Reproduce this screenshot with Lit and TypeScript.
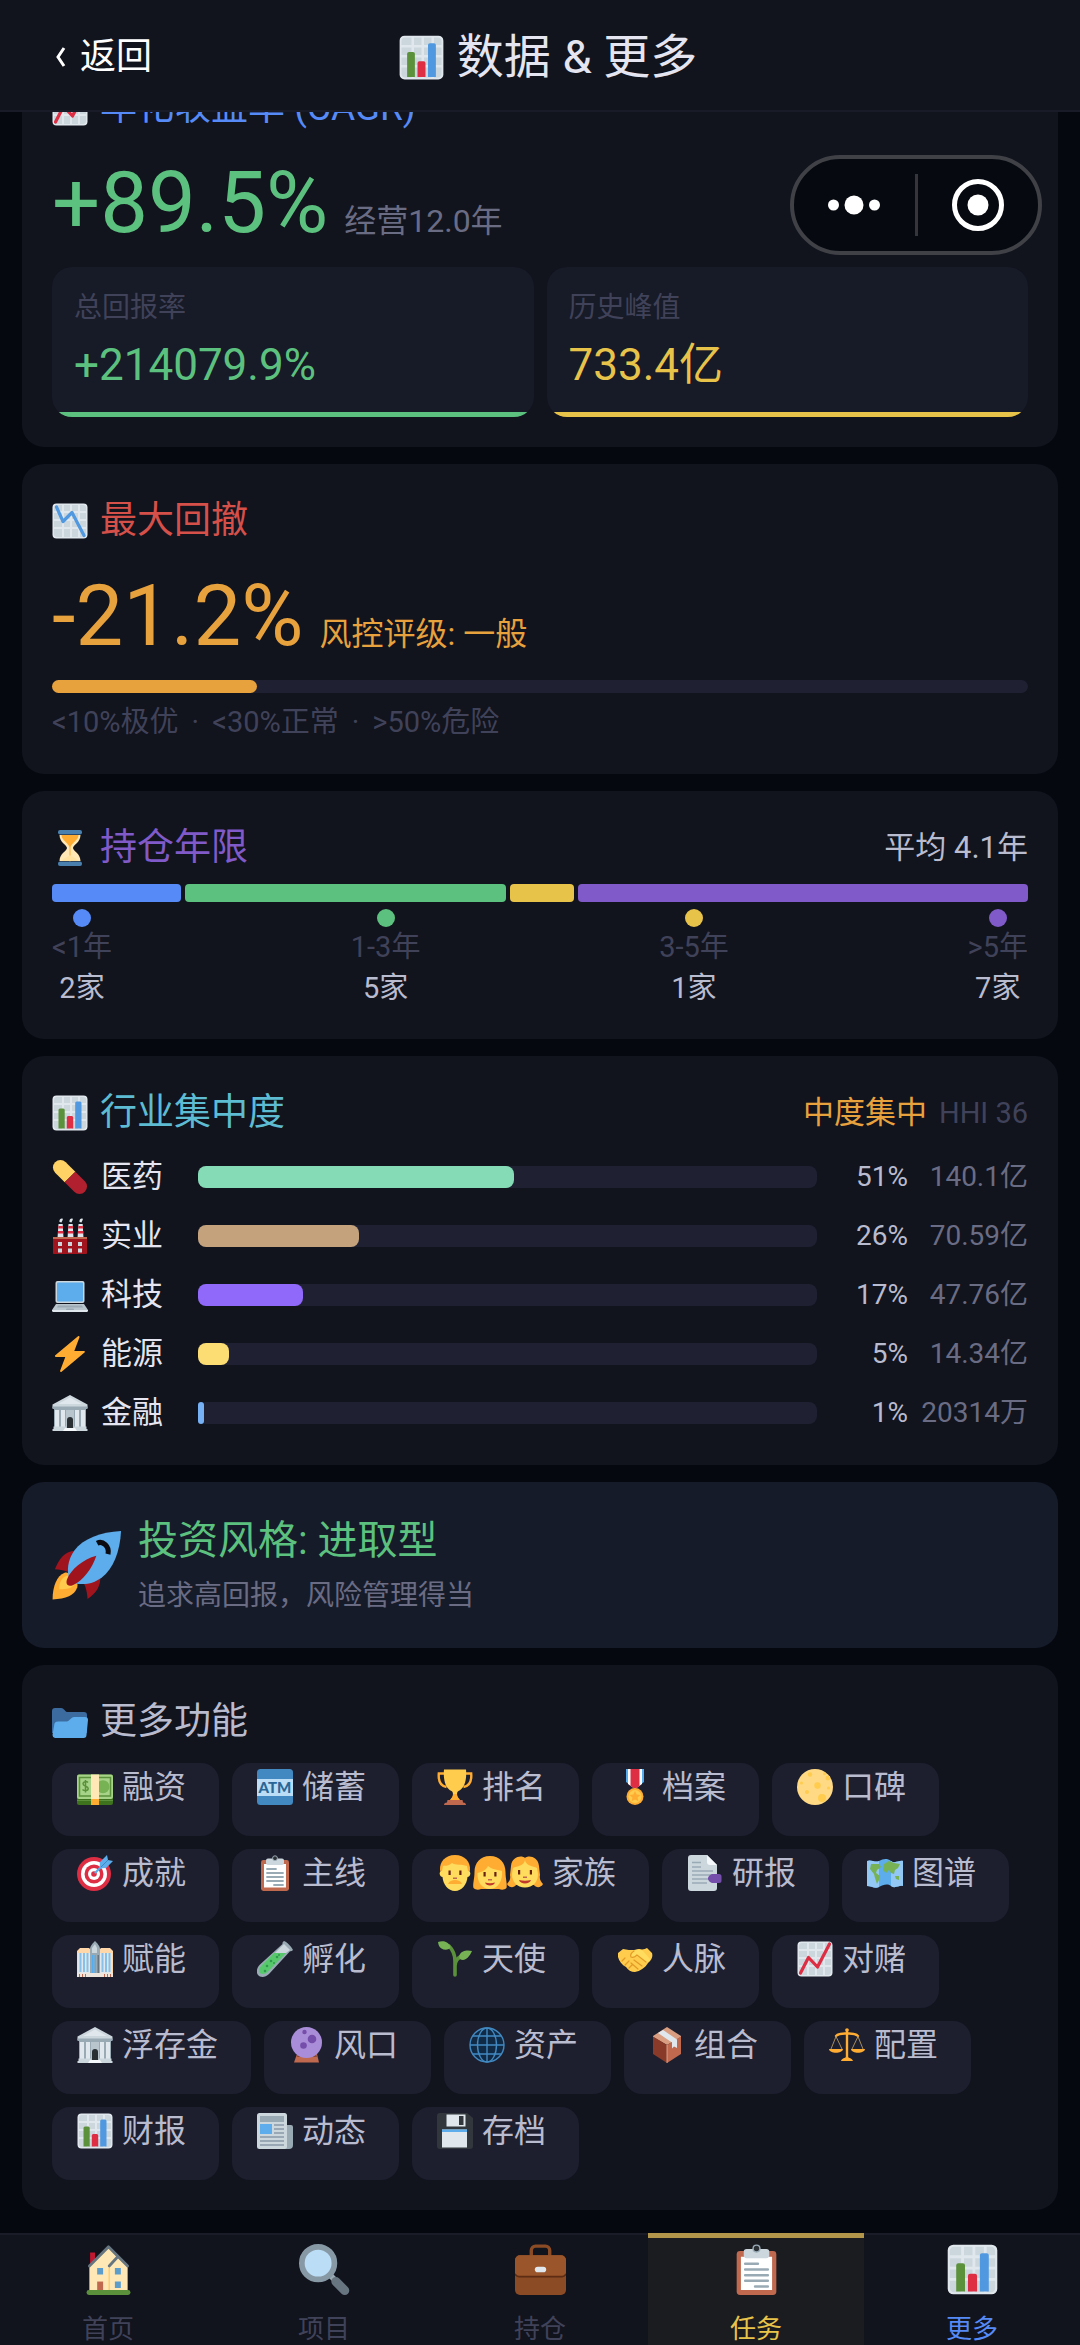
import { LitElement, html, css, svg } from "lit";
import { customElement, property } from "lit/decorators.js";
import { classMap } from "lit/directives/class-map.js";
import { styleMap } from "lit/directives/style-map.js";

const grid = svg`
  <rect x="0.5" y="0.5" width="35" height="35" rx="4" fill="#e1e8ed"/>
  <path fill="#ccd6dd" d="M2 5a3 3 0 0 1 3-3h5v6H2zM12 2h6v6h-6zM20 2h6v6h-6zM28 2h3a3 3 0 0 1 3 3v3h-6zM2 10h8v6H2zM12 10h6v6h-6zM20 10h6v6h-6zM28 10h6v6h-6zM2 18h8v6H2zM12 18h6v6h-6zM20 18h6v6h-6zM28 18h6v6h-6zM2 26h8v8H5a3 3 0 0 1-3-3zM12 26h6v8h-6zM20 26h6v8h-6zM28 26h6v5a3 3 0 0 1-3 3h-3z"/>`;

const clipboard = svg`
  <rect x="4" y="5" width="28" height="31" rx="2.4" fill="#c1694f"/>
  <path fill="#fff" d="M7 9h22v23.500H7z"/>
  <path fill="#ccd6dd" d="M22 3.500h-1.200a3 3 0 0 0-5.600 0H11A2 2 0 0 0 9 5.500V8a2 2 0 0 0 2 2h14a2 2 0 0 0 2-2V5.500a2 2 0 0 0-2-2z"/>
  <circle cx="18" cy="3.200" r="2.400" fill="#292f33" stroke="#99aab5" stroke-width="1"/>
  <path stroke="#99aab5" stroke-width="1.800" stroke-linecap="round" d="M10 14h9M10 18h16M10 22h16M10 26h16M17 30h9"/>`;

const bank = svg`
  <path fill="#ccd6dd" d="M18 0 35.500 9.500V13H.5V9.500z"/>
  <path fill="#e1e8ed" d="M18 2.500 30 9H6z"/>
  <path fill="#99aab5" d="M.5 11.500h35V14H.5zM2 14h32v18H2z"/>
  <path fill="#e1e8ed" d="M3 15h4v17H3zM9 15h4v17H9zM23 15h4v17h-4zM29 15h4v17h-4z"/>
  <path fill="#b8c5cd" d="M14 15h8v18h-8z"/>
  <path fill="#292f33" d="M15 33V25a3 3 0 0 1 6 0v8z"/>
  <path fill="#ccd6dd" d="M1.500 31.500H14v1.500h8v-1.500h12.500V34h1v2H.5v-2h1z"/>
  <path fill="#f5f8fa" d="M13 33h10l2 3H11z"/>`;

const ICONS: Record<string, unknown> = {
  bars: svg`${grid}
    <path fill="#5c913b" d="M6.500 15a1.500 1.500 0 0 1 1.500-1.500h3.200a1.500 1.500 0 0 1 1.500 1.500v18.500H6.500z"/>
    <path fill="#dd2e44" d="M14.800 22.500a1.500 1.500 0 0 1 1.500-1.500h3.400a1.500 1.500 0 0 1 1.500 1.500v11h-6.400z"/>
    <path fill="#5098e0" d="M23.200 8a1.500 1.500 0 0 1 1.500-1.500h3.300A1.500 1.500 0 0 1 29.500 8v25.500h-6.300z"/>`,
  up: svg`${grid}
    <path fill="none" stroke="#dd2e44" stroke-width="3.200" stroke-linecap="round" stroke-linejoin="round" d="m3.500 32 8-15.500 9 9.500L32.500 3"/>`,
  down: svg`${grid}
    <path fill="none" stroke="#5098e0" stroke-width="3.200" stroke-linecap="round" stroke-linejoin="round" d="m4.500 4 6.500 14.500 9-9L32 32.500"/>`,
  hourglass: svg`
    <path fill="#ffe8b6" d="M21 18c0-2.800 7.500-5.600 7.500-13h-21c0 7.400 7.500 10.200 7.500 13s-7.500 5.600-7.500 13h21c0-7.400-7.500-10.200-7.500-13z"/>
    <path fill="#ffac33" d="M9.500 5h17c0 5.500-7.800 8.500-8 12.500v14h-1v-14c-.2-4-8-7-8-12.500z"/>
    <path fill="#ffe2a0" d="M10 31c2-3.500 6-4 8-6 2 2 6 2.500 8 6z"/>
    <rect x="6" y="0" width="24" height="4.600" rx="2" fill="#4a80ad"/><rect x="6" y="31.400" width="24" height="4.600" rx="2" fill="#4a80ad"/>`,
  pill: svg`<g transform="rotate(45 18 18)">
    <path fill="#ffd265" d="M18 10.500H4.500a7.500 7.500 0 0 0 0 15H18z"/><path fill="#b0202f" d="M18 10.500h13.500a7.500 7.500 0 0 1 0 15H18z"/></g>`,
  factory: svg`
    <path fill="#e1e8ed" d="M6.500 6h4.200l.8 14H5.500zM16.500 6h4.200l.8 14h-6zM26.500 6h4.200l.8 14h-6z"/>
    <path fill="#dd2e44" d="M6.400 8h4.500l.1 2.500H6.200zM6 13h5.200l.1 2.500H5.900zM16.400 8h4.500l.1 2.500h-4.800zM16 13h5.200l.1 2.500h-5.400zM26.400 8h4.500l.1 2.500h-4.800zM26 13h5.200l.1 2.500h-5.400z"/>
    <path fill="#e1e8ed" d="M7.500 4c-.5-2 1-4 3-3.500C11.500 1 10 3 9.500 4.500zM17.500 4c-.5-2 1-4 3-3.500C21.500 1 20 3 19.500 4.500zM27.500 4c-.5-2 1-4 3-3.500C31.500 1 30 3 29.500 4.500z"/>
    <rect x="1" y="19" width="34" height="17" rx="1" fill="#a0141e"/><path fill="#c1694f" d="M1 19h34v2H1z"/>
    <path fill="#ccd6dd" d="M6 24h4v4H6zM16 24h4v4h-4zM26 24h4v4h-4zM6 30.500h4v4H6zM16 30.500h4v4h-4zM26 30.500h4v4h-4z"/>`,
  laptop: svg`
    <rect x="3.500" y="4" width="29" height="22" rx="2" fill="#ccd6dd"/><rect x="5" y="5.500" width="26" height="19" rx="1" fill="#5dadec"/>
    <path fill="#b8c5cd" d="M4 27h28l4 6H0z"/><path fill="#9aa9b4" d="M6 28.500h24l1 2H5zM14.500 31.500h7l.5 1.500h-8z"/><path fill="#e1e8ed" d="M0 33h36v.5a1.500 1.500 0 0 1-1.500 1.500h-33A1.500 1.500 0 0 1 0 33.500z"/>`,
  bolt: svg`<path fill="#ffac33" d="M32.900 15.500c-.1-.4-.5-.6-.9-.6h-9.700L27.500 1.300c.3-1-.7-1.700-1.500-1L3.300 19.300c-.7.600-.3 1.600.6 1.700h9.400L8.100 34.700c-.3 1 .7 1.700 1.500 1l22.900-19.200c.4-.3.500-.6.400-1z"/>`,
  bank,
  rocket: svg`
    <path fill="#a0141e" d="M1.500 20.200c2-5 5.200-9.500 10.500-9.500L18 18l-6 6c-3-2.500-6-3.500-10.500-3.800zM18.300 35.500c4.500-3 7-7 6.500-12L18 18l-3 7c2 3 3 6 3.300 10.500z"/>
    <path fill="#ffac33" d="M.3 35.700C.3 29 2.500 23.500 6.500 22c3-1 7.500 4 6.500 7.500-1.200 4-6 6.200-12.700 6.200z"/>
    <path fill="#ffcc4d" d="M3.700 30.500c0-4 1.400-6 3.600-6.900 2-.5 4.600 2.200 4.200 4.200-.8 2.200-3.800 2.700-7.800 2.700z"/>
    <path fill="#5dadec" d="M35.500.5C25 1 16 4.500 11.500 10.500 9 14 7.500 18.500 8.500 24l3.500 3.500c5.500 1 10-.5 13.500-3C31.500 20 35 11 35.500.5z"/>
    <path fill="#a0141e" d="M22.800 13.300C16 15 9.500 20.500 7.700 25.500c-.8 2.500.5 3.800 3 2.900 5-2 10-8.400 12.100-15.100z"/>
    <path fill="none" stroke="#0b0c12" stroke-width="2.600" d="M23.200 6.800c2.800-1.500 6.500 1.500 5.600 5.600"/>`,
  folder: svg`
    <path fill="#3c6c9f" d="M0 29V7a3 3 0 0 1 3-3h6c3 0 4 3.500 6 4h17a3 3 0 0 1 3 3v18z"/>
    <path fill="#5dadec" d="M2.200 21c.3-2 1-3.500 4-3.500h8.500c3 0 4-4.500 7.500-4.500H33a3 3 0 0 1 3 3l-1.500 15a3 3 0 0 1-3 3H3a3 3 0 0 1-2.500-3z"/>`,
  money: svg`
    <rect y="5.500" width="36" height="30.500" rx="2" fill="#3e721d"/><rect y="5.500" width="36" height="24.500" rx="2" fill="#a6d388"/>
    <path fill="none" stroke="#5c913b" stroke-width="1.500" d="M2.500 8.500h31v18.500h-31z"/><circle cx="26" cy="17.700" r="6.500" fill="#77b255"/>
    <path fill="none" stroke="#5c913b" stroke-width="1.500" d="M11 13.500c-1.500-1.500-5-1.200-5 1.300 0 3 5.200 1.800 5.200 4.600 0 2.500-4 2.800-5.700 1M8.500 11v12.500"/>
    <path fill="#5c913b" d="M0 31h36v1H0z"/><path fill="#ffe8b6" d="M14 5.500h8V30h-8z"/><path fill="#ffac33" d="M14 30h8v6h-8z"/>`,
  atm: svg`
    <rect width="36" height="36" rx="3.500" fill="#4289c1"/><path fill="#bbddf5" d="M0 10h36v17H0z"/>
    <text x="18" y="23.500" text-anchor="middle" font-family="Lato, sans-serif" font-weight="900" font-size="15" fill="#2a6797">ATM</text>`,
  trophy: svg`
    <path fill="none" stroke="#ffac33" stroke-width="2.400" d="M9 4.500H1.800C1.200 12 3.500 17 9.500 18M27 4.500h7.200C34.800 12 32.500 17 26.500 18"/>
    <path fill="#ffcc4d" d="M7 .5h22c1 10-1.500 19-7.500 21.500-1.500 1-1.500 2.500-1.500 4 0 3 3 4.500 3 6H13c0-1.500 3-3 3-6 0-1.500 0-3-1.500-4C8.500 19.500 6 10.500 7 .5z"/>
    <path fill="#ffac33" d="M16 25h4c0 3 2 4 3 6H13c1-2 3-3 3-6z"/>
    <path fill="#c1694f" d="M10.500 31h15l.5 2.500c1.500 0 3 .8 3 2.500H7c0-1.700 1.500-2.500 3-2.500z"/>`,
  medal: svg`
    <path fill="#55acee" d="M9 0h18v13l-9 6.500L9 13z"/><path fill="#fff" d="M11 0h14v15l-7 5-7-5z"/><path fill="#dd2e44" d="M13.500 0h9v17L18 20l-4.500-3z"/>
    <circle cx="18" cy="27.500" r="8.500" fill="#ffac33"/><circle cx="18" cy="27.500" r="6.500" fill="#ffcc4d"/>
    <path fill="#ffac33" d="m18 22 1.600 3.500 3.900.4-2.900 2.600.8 3.800-3.400-1.900-3.400 1.900.8-3.800-2.900-2.600 3.900-.4z"/>`,
  moon: svg`<circle cx="18" cy="18" r="18" fill="#ffd983"/>
    <g fill="#ffcc4d"><circle cx="20.500" cy="16.500" r="3.200"/><circle cx="25" cy="29" r="4"/><circle cx="31" cy="9" r="2.400"/><circle cx="10" cy="23" r="2"/><circle cx="13" cy="5.500" r="2.200"/><circle cx="27.500" cy="4.800" r="1.500"/><circle cx="4.500" cy="14" r="1.500"/><circle cx="31.500" cy="19" r="1.500"/></g>`,
  target: svg`<circle cx="17" cy="19" r="17" fill="#dd2e44"/><circle cx="17" cy="19" r="13" fill="#fff"/><circle cx="17" cy="19" r="9.500" fill="#dd2e44"/><circle cx="17" cy="19" r="6" fill="#fff"/><circle cx="17" cy="19" r="2.800" fill="#dd2e44"/>
    <path stroke="#55acee" stroke-width="2.200" stroke-linecap="round" d="M18.500 17.500 28 8"/><path fill="#5dadec" d="M22.500 13.500 23 7l7-7 1 5 5 1-7 7z"/><path stroke="#3b88c3" stroke-width="1" d="m24 12 7-7"/>`,
  clipboard,
  man: svg`
    <path fill="#ffac33" d="M18 0C8 0 2.500 7 3 15l1.500 5h27L33 15C33.500 7 28 0 18 0z"/>
    <path fill="#ffdc5d" d="M6 11c2-.5 5 .5 9-3 3 2.500 10 1 15 3l1 5c2 0 2.500 1.500 2.300 3-.3 2-1.500 3-2.800 3C30 29 25 36 18 36S6 29 5.500 22c-1.300 0-2.500-1-2.800-3-.2-1.500.3-3 2.300-3z"/>
    <path fill="#662113" d="M11.500 15.500h2.200v4.500h-2.200zM22.300 15.500h2.200v4.500h-2.200z"/><path fill="#c1694f" d="M16 22.500h4v1.500h-4z"/><path fill="#ffac33" d="M18 25c3 0 6 1 7 4H11c1-3 4-4 7-4z"/>`,
  woman: svg`
    <path fill="#ffac33" d="M18 1C8 1 2.500 8 2.500 17c0 7-2 12-1 16 2 2 5 2 7.500 1h18c2.500 1 5.500 1 7.500-1 1-4-1-9-1-16C33.500 8 28 1 18 1z"/>
    <path fill="#ffdc5d" d="M16 11c3 3 10 4 14 5 1 9-4 18-12 18S5 27 5.500 18C10 17 14 15 16 11z"/>
    <path fill="#662113" d="M11.500 17h2.200v4.500h-2.200zM22.300 17h2.200v4.500h-2.200z"/><path fill="#c1694f" d="M16 24h4v1.500h-4z"/><path fill="#c0392b" d="M13 27.500c3 1 7 1 10 0-1 4-9 4-10 0z"/>`,
  girl: svg`
    <path fill="#ffac33" d="M18 3C15 0 5 1 4 11l-1 9c1 5-1.500 7-3 9 2 4 7 4 9 1h18c2 3 7 3 9-1-1.500-2-4-4-3-9l-1-9C31 1 21 0 18 3z"/>
    <path fill="#ffdc5d" d="M18 5c1 6 8 6 12 8l1 6c0 8-5 13.500-13 13.500S5 27 5 19l1-6c4-2 11-2 12-8z"/>
    <path fill="#662113" d="M11 15h2.200v4.500H11zM22.800 15H25v4.500h-2.200z"/><path fill="#c1694f" d="M16 21.500h4V23h-4z"/><path fill="#c0392b" d="M12 25c4 1 8 1 12 0-1 4.500-11 4.500-12 0z"/>`,
  report: svg`
    <path fill="#ccd6dd" d="M1 3a3 3 0 0 1 3-3h16l10 10v23a3 3 0 0 1-3 3H4a3 3 0 0 1-3-3z"/><path fill="#f5f8fa" d="M20 0l10 10h-7a3 3 0 0 1-3-3z"/>
    <path stroke="#99aab5" stroke-width="1.500" d="M5 7.500h9M5 12h9M5 16h21M5 20h21M5 24h21M5 28h15"/>
    <path fill="#744eaa" d="M26 19h6a2.500 2.500 0 0 1 2.500 2.500v4A2.500 2.500 0 0 1 32 28h-6c-2 0-5-2-5-4.500s3-4.500 5-4.500z"/>`,
  map: svg`
    <path fill="#5dadec" d="M0 6c4-2 8 2 12 0s8-3 12 0 8-1 12 0v25c-4-1-8 3-12 0s-8-1-12 1-8-1-12-1z"/>
    <path fill="#92c8f3" d="M0 6c4-2 8 2 12 0v26c-4 2-8-1-12-1zM24 6c4 3 8-1 12 0v25c-4-1-8 3-12 0z"/>
    <path fill="#77b255" d="M4 9l8 0 2 3-4 3-1 3 4 3-1 4-2 4-2-6-1-4-4-5zM17 9l5-3 5 2 6 1-2 4-3 2-1 4-3-1-2-3-3 3-3-3zM28 21l4 0v4l-3-1z"/>`,
  office: svg`
    <path fill="#ffd7a8" d="M1 9l2-2h9l3 3v26H0V10zM35 9l-2-2h-9l-3 3v26h15V10z"/><path fill="#e1e8ed" d="M1 12h13v20H1zM22 12h13v20H22z"/>
    <path fill="#88c0e8" d="M2.500 12h2v19h-2zM6 12h2v19H6zM9.500 12h2v19h-2zM24.500 12h2v19h-2zM28 12h2v19h-2zM31.500 12h2v19h-2z"/>
    <path fill="#99aab5" d="M13 36V8c0-3 3-6 5-8 2 2 5 5 5 8v28z"/><path fill="#ccd6dd" d="M15 12V7l3-4 2 4v5z"/><path fill="#55acee" d="M15 14h1.500v18H15zM17.500 14H19v18h-1.500z"/><path fill="#66757f" d="M20.500 14H22v18h-1.500z"/>
    <path fill="#ece6df" d="M0 32h36v4H0z"/><path fill="#c1694f" d="M2 33h1v3H2zM5 33h1v3H5zM8 33h1v3H8zM27 33h1v3h-1zM30 33h1v3h-1zM33 33h1v3h-1z"/>`,
  tube: svg`
    <path fill="#99aab5" d="M27 0c3 1 7 5 9 9-1 1-2 1.500-3 1.200L12 33c-4 4-9 3.500-11 1S-.5 27 3 23.500L25.500 3c-.4-1 .5-2.500 1.500-3z"/>
    <path fill="#ccd6dd" d="M27 3l6 6-4 3H18z"/><path fill="#57c96c" d="M17 12h12L11 30.500c-3 3-6.500 3-8 1.500s-1-5 1-7z"/>
    <g fill="#2f9a4c"><circle cx="20" cy="16" r="1.300"/><circle cx="14" cy="20" r="1.300"/><circle cx="17" cy="22" r="1"/><circle cx="10" cy="25" r="1.300"/><circle cx="8" cy="30" r="1.300"/><circle cx="22" cy="14" r="1"/></g>`,
  sprout: svg`
    <path fill="none" stroke="#5c913b" stroke-width="3.600" stroke-linecap="round" d="M18 34V20c0-7-2-11-6-15M18 25c0-4 2-8 7-10"/>
    <path fill="#77b255" d="M1 1c4-1.500 10-1.500 12.500 5-1 3-6 3.500-9 1.500S1.500 3 1 1zM35 10c-4-1-10-1-12.500 4-1 3 .5 5 3.500 5s7-4 9-9z"/>`,
  handshake: svg`
    <path fill="#ffcc4d" d="M1 12l5-4c4 1 8 1 11 1l5-1c4 1 6 0 8-1l5 5c1 3 0 7-4 10-3 5-8 8-13 9-4 0-7-2-9-5-4-2-7-6-8-10z"/>
    <path fill="#ffdc5d" d="M16 11c3-3 6-3 10-1l7 8c0 2-1 3-3 3-4-2-7-4-10-6-2 2-5 3-6 1 0-2 1-4 2-5z"/>
    <path fill="none" stroke="#e39a26" stroke-width="1.200" stroke-linecap="round" d="M17 10c-3 2-4 4-3 6 2 1 4 0 6-2l9 7M17 19l8 6M14 22l7 6M5 20l3-3M8 24l4-4M12 27l3-3"/>`,
  crystal: svg`
    <path fill="#c1694f" d="M8 27h20l2 8.500H5z"/><path fill="#8a4b38" d="M9 27h18l1 3H8z"/><circle cx="17.500" cy="15.500" r="15.500" fill="#aa8dd8"/>
    <circle cx="15.500" cy="5" r="2.200" fill="#744eaa"/><circle cx="23" cy="12" r="4.300" fill="#744eaa"/><circle cx="14.500" cy="18.500" r="3.300" fill="#744eaa"/>`,
  globe: svg`<circle cx="18" cy="18" r="17" fill="#102a45"/><g fill="none" stroke="#4289c1" stroke-width="1.400"><circle cx="18" cy="18" r="17"/><ellipse cx="18" cy="18" rx="9.500" ry="17"/><path d="M18 1v34M1 18h34M4 9h28M4 27h28"/></g>`,
  box: svg`
    <path fill="#d99e82" d="M18 0l14 9v1L18 18 4 10V9z"/><path fill="#8a3a28" d="M4 9.500 18 18v18L4 27z"/><path fill="#c1694f" d="M32 9.500 18 18v18l14-9z"/>
    <path fill="#e1e8ed" d="M9 6l5-3 14 9.500V21l-3-1.500-2 2V15.500z"/><path stroke="#e8b49b" stroke-width=".8" d="M18 18v18"/>`,
  scales: svg`
    <path fill="#ffac33" d="M16.800 2h2.400v28h-2.400z"/><circle cx="18" cy="3" r="1.800" fill="#ffac33"/>
    <path fill="none" stroke="#ffac33" stroke-width="2.400" stroke-linecap="round" d="M7 9c3-3 7-2.500 11-2.500S26 6 29 9"/>
    <path fill="none" stroke="#b89a63" stroke-width=".9" d="M7 9.500 2 22M7 9.500 13 22M29 9.500 23 22M29 9.500 34 22"/>
    <path fill="#ffac33" d="M0 22h14c-.5 5-13.500 5-14 0zM22 22h14c-.5 5-13.500 5-14 0zM12 34c1-3 4-2.500 6-5 2 2.500 5 2 6 5z"/>`,
  news: svg`
    <path fill="#99aab5" d="M28 12h6a2 2 0 0 1 2 2v18a4 4 0 0 1-4 4h-6z"/><rect width="30" height="36" rx="2.500" fill="#ccd6dd"/>
    <path fill="#99aab5" d="M3 3h24v6H3z"/><path fill="#5dadec" d="M3 11h12v10H3z"/><path stroke="#8899a6" stroke-width="1.300" d="M17 12h10M17 16h10M17 20h10M3 24h24M3 28h24M3 32h24"/>`,
  floppy: svg`
    <path fill="#31373d" d="M0 3a3 3 0 0 1 3-3h27l6 5v28a3 3 0 0 1-3 3H3a3 3 0 0 1-3-3z"/><path fill="#e1e8ed" d="M9.500 1.500h19v12h-19z"/><path fill="#31373d" d="M22 3h4.500v9H22z"/>
    <path fill="#e1e8ed" d="M5 16.500h25v18H5z"/><path fill="#5dadec" d="M5 16.500h25V19H5z"/>`,
  house: svg`
    <path fill="#be1931" d="M5 6h3.500v9H5z"/><path fill="#ffe8b6" d="M4.500 15.500 18 2.500l6 6.500 7.500 7V33h-27z"/><path stroke="#ffcc6f" stroke-width="1" d="M18.500 17v15.500"/>
    <path fill="none" stroke="#66757f" stroke-width="2" stroke-linecap="round" stroke-linejoin="round" d="M4.500 15.500 18 2l13.500 13.500M18.500 15.500 24.500 9"/>
    <path fill="#5c9dcc" d="M10 17h4.200v4.500H10zM22.500 17h4.200v4.500h-4.200zM22.500 26.500h4.200V31h-4.200z"/><path fill="#c1694f" d="M10 26.500h4.200V33H10z"/><rect x="2.500" y="32.500" width="31" height="3.500" rx="1.700" fill="#5c913b"/>`,
  magnifier: svg`
    <path stroke="#99aab5" stroke-width="4" d="m21 21 4 4"/><path stroke="#66757f" stroke-width="6.400" stroke-linecap="round" d="m26 26.500 6.300 6.300"/>
    <circle cx="13.500" cy="13.500" r="11.500" fill="#bbddf5" stroke="#8899a6" stroke-width="4"/>`,
  briefcase: svg`
    <path fill="none" stroke="#8a4b25" stroke-width="2.400" d="M11.500 9V4.500a3 3 0 0 1 3-3h7a3 3 0 0 1 3 3V9"/>
    <rect x="0" y="8" width="36" height="28" rx="3.500" fill="#8a4b25"/><path fill="#9b552b" d="M0 11.500A3.500 3.500 0 0 1 3.500 8h29a3.500 3.500 0 0 1 3.500 3.500V21a3 3 0 0 1-3 2H3a3 3 0 0 1-3-2z"/>
    <path fill="none" stroke="#5d2c12" stroke-width="1.200" d="M0 21a3 3 0 0 0 3 2h30a3 3 0 0 0 3-2"/><rect x="14" y="16" width="8" height="4" rx="2" fill="#e1e8ed"/>`,
};

@customElement("emoji-icon")
export class EmojiIcon extends LitElement {
  @property() name = "";
  static styles = css`
    :host { display: block; flex: none; width: 36px; height: 36px; }
    .art { display: block; width: 100%; height: 100%; }
  `;
  render() {
    return html`<svg class="art" viewBox="0 0 36 36" aria-hidden="true">${ICONS[this.name]}</svg>`;
  }
}

const PERIODS = [
  { tone: "blue", label: "<1年", count: 2 },
  { tone: "green", label: "1-3年", count: 5 },
  { tone: "yellow", label: "3-5年", count: 1 },
  { tone: "purple", label: ">5年", count: 7 },
];

const SECTORS = [
  { icon: "pill", name: "医药", share: 51, amount: "140.1亿", color: "#84dbb5" },
  { icon: "factory", name: "实业", share: 26, amount: "70.59亿", color: "#c3a27c" },
  { icon: "laptop", name: "科技", share: 17, amount: "47.76亿", color: "#9068fa" },
  { icon: "bolt", name: "能源", share: 5, amount: "14.34亿", color: "#fbdd74" },
  { icon: "bank", name: "金融", share: 1, amount: "20314万", color: "#76b0f5" },
];

const FEATURES: [string[], string][] = [
  [["money"], "融资"], [["atm"], "储蓄"], [["trophy"], "排名"], [["medal"], "档案"], [["moon"], "口碑"],
  [["target"], "成就"], [["clipboard"], "主线"], [["man", "woman", "girl"], "家族"], [["report"], "研报"], [["map"], "图谱"],
  [["office"], "赋能"], [["tube"], "孵化"], [["sprout"], "天使"], [["handshake"], "人脉"], [["up"], "对赌"],
  [["bank"], "浮存金"], [["crystal"], "风口"], [["globe"], "资产"], [["box"], "组合"], [["scales"], "配置"],
  [["bars"], "财报"], [["news"], "动态"], [["floppy"], "存档"],
];

const TABS = [
  { icon: "house", label: "首页", href: "#home" },
  { icon: "magnifier", label: "项目", href: "#projects" },
  { icon: "briefcase", label: "持仓", href: "#holdings" },
  { icon: "clipboard", label: "任务", href: "#tasks", task: true },
  { icon: "bars", label: "更多", href: "#more", current: true },
];

@customElement("app-root")
export class AppRoot extends LitElement {
  static styles = css`
    :host {
      --card: #11131d; --text: #e4e5f0; --soft: #b9bbce; --muted: #6a6c84; --dim: #404259;
      --green: #5cc17e; --yellow: #e8c34a; --orange: #e7a13d; --red: #d6504a;
      --blue: #568bf7; --purple: #805ac8; --cyan: #5dbbd2; --track: #1f2132;
      display: flex; flex-direction: column; position: relative; min-height: 100vh;
      background: #05080f; color: var(--text);
      font-family: Roboto, "Noto Sans CJK SC", sans-serif; font-size: 28px; line-height: 44px;
    }
    * { box-sizing: border-box; }
    h1, h2, p { margin: 0; font-weight: 400; }
    button { font: inherit; color: inherit; background: none; border: 0; padding: 0; cursor: pointer; }

    .header {
      position: sticky; top: 0; z-index: 2; display: grid; grid-template-columns: 1fr auto 1fr; align-items: center;
      height: 112px; padding: 4px 38px 0 54px; background: var(--card); border-bottom: 2px solid #191c28;
    }
    .back { justify-self: start; display: flex; align-items: center; gap: 13px; font-size: 36px; color: #fff; }
    .chevron { width: 13px; height: 22px; fill: none; stroke: currentColor; stroke-width: 3; }
    .page-title { display: flex; align-items: center; gap: 13px; font-size: 47px; line-height: 64px; }
    .page-title emoji-icon { width: 45px; height: 45px; }

    .capsule {
      position: absolute; z-index: 3; top: 155px; right: 38px; display: flex; align-items: center;
      width: 252px; height: 100px; border: 4px solid #3f4147; border-radius: 50px; background: #060910;
    }
    .capsule button { flex: 1; display: grid; place-items: center; height: 62px; color: #fff; }
    .capsule button + button { border-left: 3px solid #34363c; }
    .dots { width: 52px; height: 20px; fill: currentColor; }
    .ring { width: 54px; height: 54px; fill: currentColor; }

    .content { flex: 1; display: flex; flex-direction: column; gap: 17px; margin-top: -61px; padding: 0 22px 23px; }
    .card { padding: 30px; border-radius: 22px; background: var(--card); }
    .title { display: flex; align-items: center; gap: 12px; font-size: 37px; line-height: 54px; }
    .title-row { display: flex; align-items: center; justify-content: space-between; }
    .aside { display: flex; align-items: baseline; gap: 12px; font-size: 31px; color: var(--soft); }
    .aside .small { font-size: 29px; color: var(--dim); }
    .hero { display: flex; align-items: baseline; gap: 16px; margin: 12px 0 8px; font-size: 85px; line-height: 112px; }
    .hero .note { font-size: 32px; line-height: 44px; }
    .blue { color: var(--blue); } .green { color: var(--green); } .yellow { color: var(--yellow); }
    .purple { color: var(--purple); } .orange { color: var(--orange); } .red { color: var(--red); }
    .cyan { color: var(--cyan); } .muted { color: var(--muted); } .soft { color: var(--soft); }

    .tiles { display: grid; grid-template-columns: 1fr 1fr; gap: 13px; }
    .tile { overflow: hidden; border-radius: 20px; background: #171a27; }
    .tile-label { padding: 19px 22px 0; color: var(--dim); }
    .tile-value { margin-top: 7px; padding: 0 22px 19px; font-size: 44px; line-height: 56px; }
    .tile-line { height: 5px; background: currentColor; }

    .meter { height: 13px; border-radius: 7px; background: var(--track); }
    .fill { height: 100%; border-radius: inherit; background: var(--orange); }
    .legend { display: flex; gap: 13px; margin-top: 7px; font-size: 29px; color: var(--dim); }

    .segments { display: flex; gap: 4px; height: 18px; margin: 9px 0 7px; }
    .segment { border-radius: 4px; background: currentColor; }
    .periods { display: flex; justify-content: space-between; font-size: 29px; }
    .period { display: flex; flex-direction: column; align-items: center; line-height: 41px; }
    .dot { width: 18px; height: 18px; border-radius: 50%; background: currentColor; }
    .dim { color: var(--dim); }

    .sectors { display: grid; gap: 15px; margin-top: 15px; }
    .sector { display: grid; grid-template-columns: 36px 84px 1fr 78px 107px; column-gap: 13px; align-items: center; text-align: right; }
    .sector-name { font-size: 31px; text-align: left; }
    .sector .meter { height: 22px; border-radius: 8px; }

    .style { display: flex; align-items: center; gap: 16px; background: #161b2a; }
    .style emoji-icon { width: 70px; height: 70px; }
    .style-name { margin-bottom: 4px; font-size: 40px; line-height: 58px; }

    .chips { display: flex; flex-wrap: wrap; gap: 13px; margin-top: 14px; }
    .chip {
      display: flex; align-items: flex-start; height: 73px; padding: 0 33px 0 25px; border-radius: 18px;
      background: #1d1f2e; color: var(--soft); font-size: 32px; line-height: 48px;
    }
    .chip emoji-icon { height: 48px; padding: 6px 0; box-sizing: border-box; }
    .chip emoji-icon + emoji-icon { margin-left: -1px; }
    .chip-name { margin-left: 9px; }

    .tabs { position: sticky; bottom: 0; z-index: 2; display: flex; height: 112px; background: var(--card); }
    .tab {
      flex: 1; display: flex; flex-direction: column; align-items: center; justify-content: space-between;
      padding-top: 11px; box-shadow: inset 0 2px #1a1d28; color: var(--dim); font-size: 26px; line-height: 32px; text-decoration: none;
    }
    .tab emoji-icon { width: 51px; height: 51px; }
    .tab.task { background: #1b1c20; box-shadow: inset 0 5px #b4964a; color: var(--yellow); }
    .tab.current { color: var(--blue); }
  `;

  private heading(icon: string, text: string, tone: string) {
    return html`<h2 class="title ${tone}"><emoji-icon name=${icon}></emoji-icon>${text}</h2>`;
  }

  private tile(label: string, value: string, tone: string) {
    return html`<div class="tile">
      <p class="tile-label">${label}</p>
      <p class="tile-value ${tone}">${value}</p>
      <div class="tile-line ${tone}"></div>
    </div>`;
  }

  render() {
    return html`
      <header class="header">
        <button class="back" type="button">
          <svg class="chevron" viewBox="0 0 13 22" aria-hidden="true"><path d="M10 2 4 11l6 9" /></svg>返回
        </button>
        <h1 class="page-title"><emoji-icon name="bars"></emoji-icon>数据 &amp; 更多</h1>
      </header>

      <div class="capsule">
        <button type="button" aria-label="菜单">
          <svg class="dots" viewBox="0 0 52 20"><circle cx="5.500" cy="10" r="5.500" /><circle cx="26" cy="10" r="9.500" /><circle cx="46.500" cy="10" r="5.500" /></svg>
        </button>
        <button type="button" aria-label="关闭">
          <svg class="ring" viewBox="0 0 54 54"><circle cx="27" cy="27" r="23.500" fill="none" stroke="currentColor" stroke-width="5" /><circle cx="27" cy="27" r="10.500" /></svg>
        </button>
      </div>

      <main class="content">
        <section class="card">
          ${this.heading("up", "年化收益率 (CAGR)", "blue")}
          <p class="hero green">+89.5%<span class="note muted">经营12.0年</span></p>
          <div class="tiles">
            ${this.tile("总回报率", "+214079.9%", "green")}
            ${this.tile("历史峰值", "733.4亿", "yellow")}
          </div>
        </section>

        <section class="card">
          ${this.heading("down", "最大回撤", "red")}
          <p class="hero orange">-21.2%<span class="note">风控评级: 一般</span></p>
          <div class="meter"><div class="fill" style=${styleMap({ width: "21%" })}></div></div>
          <p class="legend"><span>&lt;10%极优</span><span>·</span><span>&lt;30%正常</span><span>·</span><span>&gt;50%危险</span></p>
        </section>

        <section class="card">
          <div class="title-row">
            ${this.heading("hourglass", "持仓年限", "purple")}
            <span class="aside">平均 4.1年</span>
          </div>
          <div class="segments">
            ${PERIODS.map((p) => html`<div class="segment ${p.tone}" style=${styleMap({ flex: `${p.count} 0 0` })}></div>`)}
          </div>
          <div class="periods">
            ${PERIODS.map((p) => html`<div class="period">
              <span class="dot ${p.tone}"></span><span class="dim">${p.label}</span><span class="soft">${p.count}家</span>
            </div>`)}
          </div>
        </section>

        <section class="card">
          <div class="title-row">
            ${this.heading("bars", "行业集中度", "cyan")}
            <span class="aside"><span class="orange">中度集中</span><span class="small">HHI 36</span></span>
          </div>
          <div class="sectors">
            ${SECTORS.map((s) => html`<div class="sector">
              <emoji-icon name=${s.icon}></emoji-icon>
              <span class="sector-name">${s.name}</span>
              <div class="meter"><div class="fill" style=${styleMap({ width: `${s.share}%`, background: s.color })}></div></div>
              <span class="soft">${s.share}%</span>
              <span class="muted">${s.amount}</span>
            </div>`)}
          </div>
        </section>

        <section class="card style">
          <emoji-icon name="rocket"></emoji-icon>
          <div>
            <h2 class="style-name green">投资风格: 进取型</h2>
            <p class="muted">追求高回报，风险管理得当</p>
          </div>
        </section>

        <section class="card">
          ${this.heading("folder", "更多功能", "soft")}
          <div class="chips">
            ${FEATURES.map(([icons, name]) => html`<button class="chip" type="button">
              ${icons.map((i) => html`<emoji-icon name=${i}></emoji-icon>`)}<span class="chip-name">${name}</span>
            </button>`)}
          </div>
        </section>
      </main>

      <nav class="tabs">
        ${TABS.map((t) => html`<a class=${classMap({ tab: true, task: !!t.task, current: !!t.current })} href=${t.href}>
          <emoji-icon name=${t.icon}></emoji-icon>${t.label}
        </a>`)}
      </nav>
    `;
  }
}
